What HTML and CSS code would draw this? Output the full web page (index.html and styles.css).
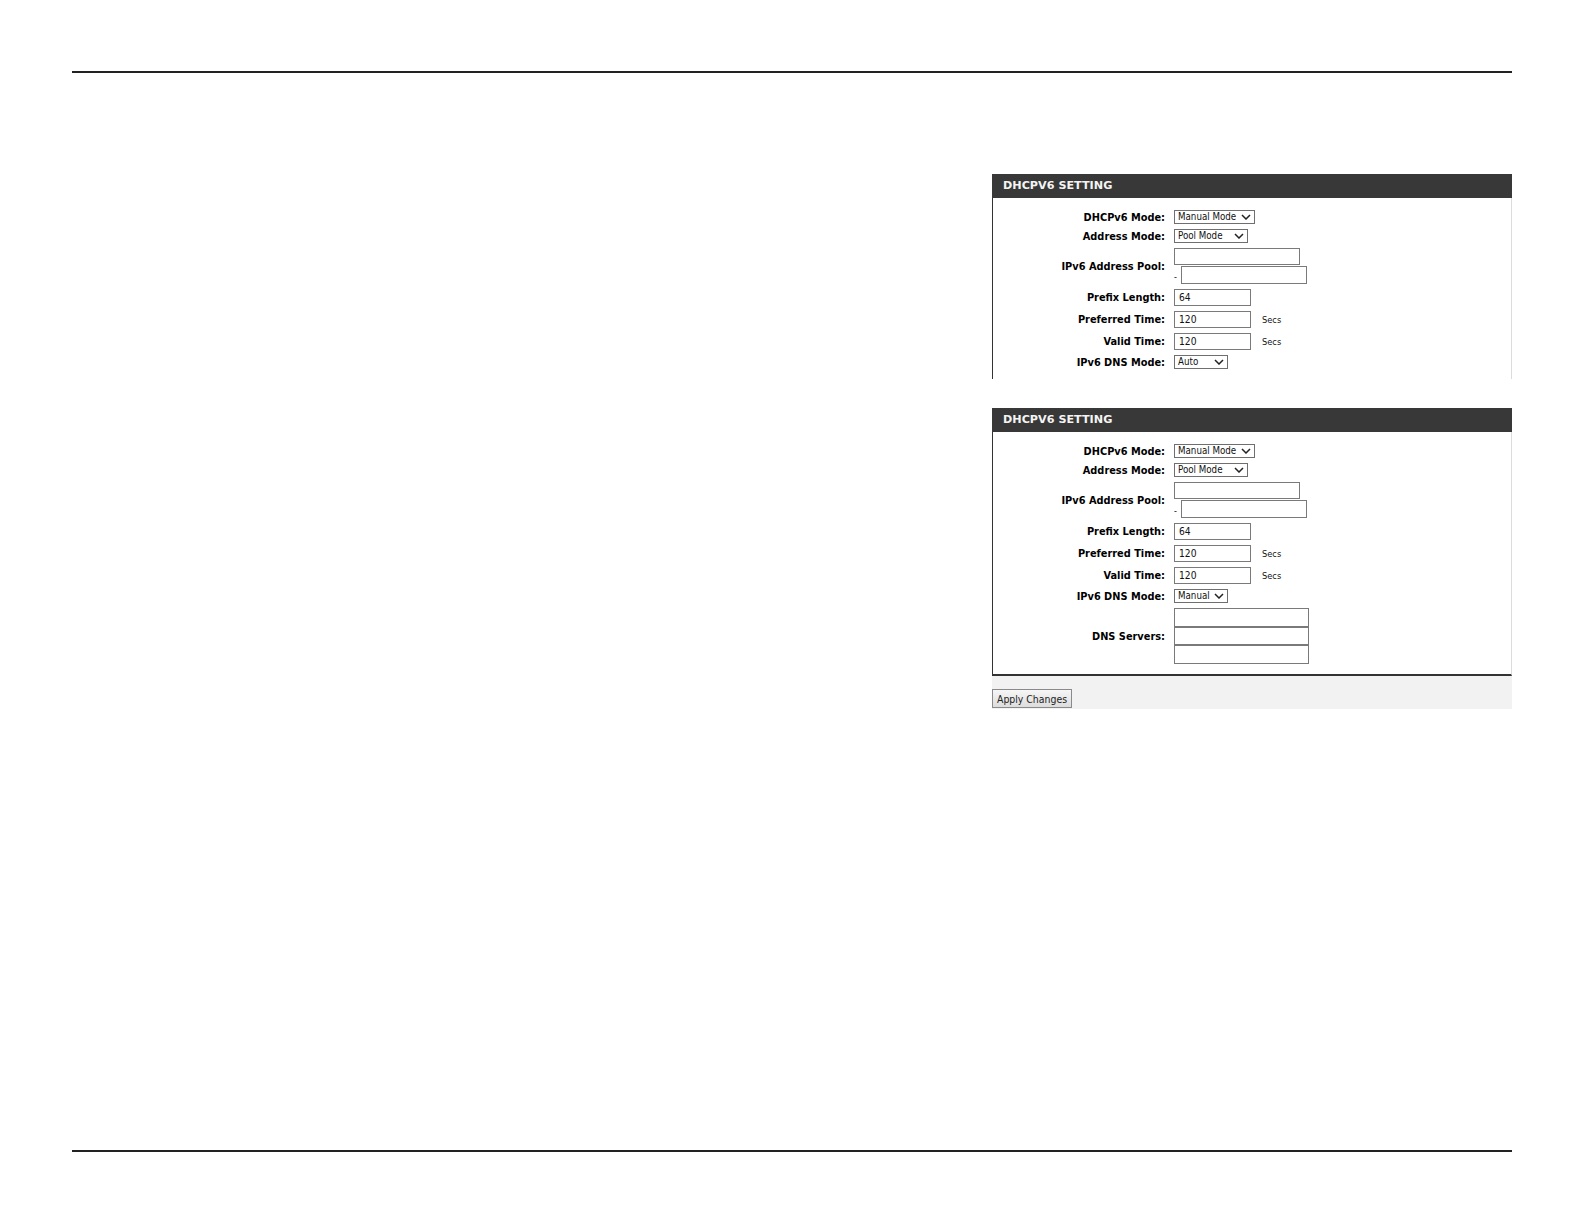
FILE: index.html
```html
<!DOCTYPE html>
<html lang="en">
<head>
<meta charset="utf-8">
<title>DHCPv6 Setting</title>
<link rel="stylesheet" href="styles.css">
</head>
<body>
<div class="page">
  <div class="rule rule-top"></div>

  <main class="content">
    <section class="panel panel-cut">
      <h2 class="panel-title">DHCPV6 SETTING</h2>
      <div class="panel-body">
        <div class="form">
          <div class="label">DHCPv6 Mode:</div>
          <div class="field"><span class="select w-mode">Manual Mode<svg class="chev" viewBox="0 0 10 6"><path d="M1 1 L5 5 L9 1"/></svg></span></div>

          <div class="label">Address Mode:</div>
          <div class="field"><span class="select w-addr">Pool Mode<svg class="chev" viewBox="0 0 10 6"><path d="M1 1 L5 5 L9 1"/></svg></span></div>

          <div class="label">IPv6 Address Pool:</div>
          <div class="field pool">
            <input class="txt w-pool h17" type="text" value="">
            <div class="pool-row"><span class="dash">-</span><input class="txt w-pool h18" type="text" value=""></div>
          </div>

          <div class="label">Prefix Length:</div>
          <div class="field"><input class="txt w-num h17" type="text" value="64"></div>

          <div class="label">Preferred Time:</div>
          <div class="field"><input class="txt w-num h17" type="text" value="120"><span class="unit">Secs</span></div>

          <div class="label">Valid Time:</div>
          <div class="field"><input class="txt w-num h17" type="text" value="120"><span class="unit">Secs</span></div>

          <div class="label">IPv6 DNS Mode:</div>
          <div class="field"><span class="select w-dns">Auto<svg class="chev" viewBox="0 0 10 6"><path d="M1 1 L5 5 L9 1"/></svg></span></div>
        </div>
      </div>
    </section>

    <section class="panel panel-closed">
      <h2 class="panel-title">DHCPV6 SETTING</h2>
      <div class="panel-body">
        <div class="form">
          <div class="label">DHCPv6 Mode:</div>
          <div class="field"><span class="select w-mode">Manual Mode<svg class="chev" viewBox="0 0 10 6"><path d="M1 1 L5 5 L9 1"/></svg></span></div>

          <div class="label">Address Mode:</div>
          <div class="field"><span class="select w-addr">Pool Mode<svg class="chev" viewBox="0 0 10 6"><path d="M1 1 L5 5 L9 1"/></svg></span></div>

          <div class="label">IPv6 Address Pool:</div>
          <div class="field pool">
            <input class="txt w-pool h17" type="text" value="">
            <div class="pool-row"><span class="dash">-</span><input class="txt w-pool h18" type="text" value=""></div>
          </div>

          <div class="label">Prefix Length:</div>
          <div class="field"><input class="txt w-num h17" type="text" value="64"></div>

          <div class="label">Preferred Time:</div>
          <div class="field"><input class="txt w-num h17" type="text" value="120"><span class="unit">Secs</span></div>

          <div class="label">Valid Time:</div>
          <div class="field"><input class="txt w-num h17" type="text" value="120"><span class="unit">Secs</span></div>

          <div class="label">IPv6 DNS Mode:</div>
          <div class="field"><span class="select w-dns">Manual<svg class="chev" viewBox="0 0 10 6"><path d="M1 1 L5 5 L9 1"/></svg></span></div>

          <div class="label">DNS Servers:</div>
          <div class="field servers">
            <input class="txt w-dnsin h19" type="text" value="">
            <input class="txt w-dnsin h18" type="text" value="">
            <input class="txt w-dnsin h19" type="text" value="">
          </div>
        </div>
      </div>
      <div class="actions">
        <button class="btn" type="button">Apply Changes</button>
      </div>
    </section>
  </main>

  <div class="rule rule-bottom"></div>
</div>
</body>
</html>
```

FILE: styles.css
```css
html, body {
  margin: 0;
  padding: 0;
  background: #ffffff;
}

.page {
  width: 1584px;
  height: 1224px;
  display: flex;
  flex-direction: column;
  font-family: "DejaVu Sans Condensed", "DejaVu Sans", sans-serif;
  font-stretch: condensed;
  color: #000;
}

.rule {
  margin-left: 72px;
  width: 1440px;
  height: 2px;
  background: #222222;
  flex: none;
}

.rule-top {
  margin-top: 71px;
}

.rule-bottom {
  margin-top: auto;
  margin-bottom: 72px;
}

.content {
  margin-left: 992px;
  width: 520px;
  margin-top: 101px;
  display: flex;
  flex-direction: column;
  gap: 29px;
}

.panel-title {
  margin: 0;
  height: 24px;
  line-height: 24px;
  padding-left: 11px;
  background: #383838;
  color: #f4f4f4;
  font-family: "DejaVu Sans", sans-serif;
  font-stretch: normal;
  font-size: 11.2px;
  font-weight: bold;
}

.panel-body {
  border-left: 1px solid #333333;
  border-right: 1px solid #dcdcdc;
}

.panel-cut .panel-body {
  padding: 12px 0 10px;
}

.panel-closed .panel-body {
  padding: 12px 0 10px;
  border-bottom: 2px solid #333333;
}

.form {
  display: grid;
  grid-template-columns: 172px 1fr;
  column-gap: 9px;
  row-gap: 5px;
  align-items: center;
}

.label {
  text-align: right;
  font-weight: bold;
  font-size: 10.9px;
  line-height: 13px;
  white-space: nowrap;
}

.field {
  display: flex;
  align-items: center;
}

.select {
  box-sizing: border-box;
  height: 14px;
  display: inline-flex;
  align-items: center;
  justify-content: space-between;
  border: 1px solid #6f6f6f;
  background: #fff;
  padding: 0 3px 0 3px;
  font-size: 9.7px;
  line-height: 12px;
  color: #111;
}

.chev {
  width: 10px;
  height: 6px;
  flex: none;
}

.chev path {
  fill: none;
  stroke: #222;
  stroke-width: 1.5;
}

.w-mode { width: 81px; }
.w-addr { width: 74px; }
.w-dns  { width: 54px; }

.txt {
  box-sizing: border-box;
  margin: 0;
  border: 1px solid #7a7a7a;
  background: #fff;
  padding: 0 0 0 4px;
  font-family: "DejaVu Sans Condensed", "DejaVu Sans", sans-serif;
  font-stretch: condensed;
  font-size: 10.2px;
  color: #111;
  outline: none;
  display: block;
}

.h17 { height: 17px; }
.h18 { height: 18px; }
.h19 { height: 19px; }

.w-pool  { width: 126px; }
.w-num   { width: 77px; }
.w-dnsin { width: 135px; }

.pool {
  flex-direction: column;
  align-items: flex-start;
}

.pool-row {
  display: flex;
  align-items: center;
  margin-top: 1px;
}

.dash {
  width: 7px;
  font-size: 9px;
  line-height: 10px;
  padding-top: 4px;
}

.unit {
  margin-left: 11px;
  font-size: 9.2px;
  color: #111;
}

.servers {
  flex-direction: column;
  align-items: flex-start;
}

.actions {
  background: #f2f2f2;
  height: 33px;
  padding-top: 13px;
  box-sizing: border-box;
}

.btn {
  display: block;
  box-sizing: border-box;
  width: 80px;
  height: 19px;
  margin: 0;
  padding: 0 3px;
  border: 1px solid #8a8a8a;
  background: linear-gradient(#f6f6f6, #dddddd);
  font-family: "DejaVu Sans Condensed", "DejaVu Sans", sans-serif;
  font-stretch: condensed;
  font-size: 10.4px;
  color: #222;
  white-space: nowrap;
}
```
